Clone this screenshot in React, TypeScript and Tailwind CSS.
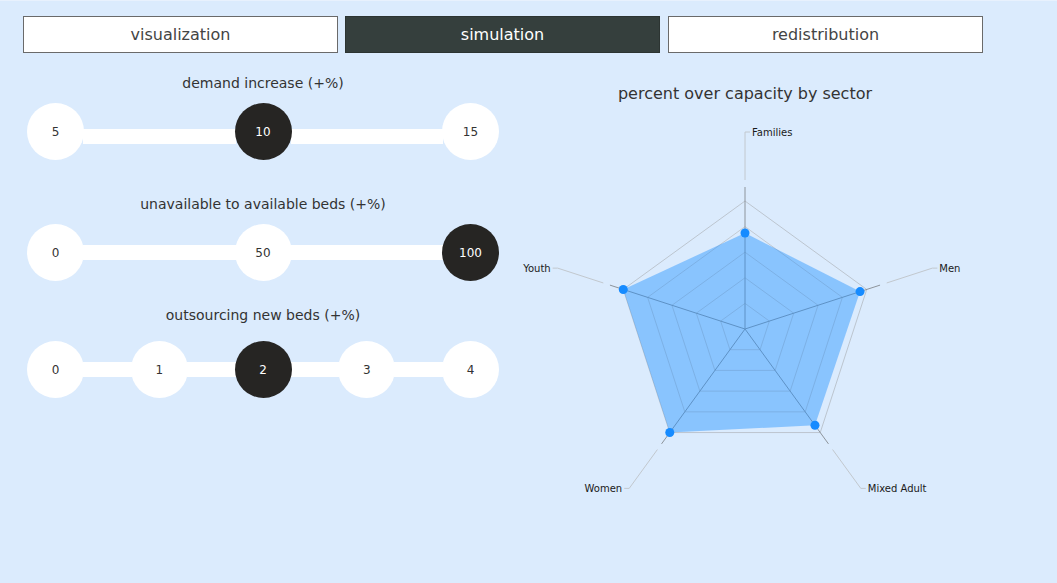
import { Fragment } from "react";
import clsx from "clsx";

type SliderProps = {
    label: string;
    steps: number[];
    value: number;
    className?: string;
    rowClass?: string;
    trackClass?: string;
};

function StepSlider({ label, steps, value, className, rowClass = "mt-[10px]", trackClass }: SliderProps) {
    return (
        <div className={className}>
            <div className="text-center text-[14px] leading-5 text-[#333]">{label}</div>
            <div className={clsx("flex items-center", rowClass)}>
                {steps.map((s, i) => (
                    <Fragment key={s}>
                        {i > 0 && <div className={clsx("flex-1 h-[15px] bg-white -mx-px", trackClass)} />}
                        <div
                            className={clsx(
                                "relative z-10 size-[57px] shrink-0 rounded-full flex items-center justify-center text-[12px]",
                                s === value ? "bg-[#262523] text-white" : "bg-white text-[#333]"
                            )}
                        >
                            {s}
                        </div>
                    </Fragment>
                ))}
            </div>
        </div>
    );
}

// radar chart: sectors clockwise from the top
const sectors = [
    { name: "Families", value: 0.75 },
    { name: "Men", value: 0.945 },
    { name: "Mixed Adult", value: 0.93 },
    { name: "Women", value: 1.0 },
    { name: "Youth", value: 1.0 },
];

const CX = 240;
const CY = 223;
const R = 128;

function polar(r: number, i: number) {
    const a = ((-90 + i * 72) * Math.PI) / 180;
    return { x: CX + r * Math.cos(a), y: CY + r * Math.sin(a) };
}

function ring(r: number) {
    return sectors.map((_, i) => {
        const p = polar(r, i);
        return `${p.x},${p.y}`;
    }).join(" ");
}

function Radar() {
    const dataPts = sectors.map((s, i) => polar(R * s.value, i));
    return (
        <svg width="480" height="420" viewBox="0 0 480 420" className="block">
            {[1, 2, 3, 4, 5].map((k) => (
                <polygon key={k} points={ring((R / 5) * k)} fill="none" stroke={k === 5 ? "#bcc5cf" : "#c3cad2"} strokeWidth="1" />
            ))}
            {sectors.map((s, i) => {
                const end = polar(142, i);
                const l1 = polar(149, i);
                const l2 = polar(197, i);
                const right = Math.cos(((-90 + i * 72) * Math.PI) / 180) >= -0.001;
                const tx = right ? l2.x + 5 : l2.x - 5;
                return (
                    <g key={s.name}>
                        <line x1={CX} y1={CY} x2={end.x} y2={end.y} stroke="#8d949b" strokeWidth="1" />
                        <polyline points={`${l1.x},${l1.y} ${l2.x},${l2.y} ${tx},${l2.y}`} fill="none" stroke="#c2c8ce" strokeWidth="1" />
                        <text
                            x={right ? tx + 2 : tx - 2}
                            y={l2.y}
                            textAnchor={right ? "start" : "end"}
                            dominantBaseline="central"
                            fontSize="10"
                            fill="#1a1a1a"
                            fontFamily="DejaVu Sans, sans-serif"
                        >
                            {s.name}
                        </text>
                    </g>
                );
            })}
            <polygon points={dataPts.map((p) => `${p.x},${p.y}`).join(" ")} fill="#1e90ff" fillOpacity="0.43" />
            {dataPts.map((p, i) => (
                <circle key={i} cx={p.x} cy={p.y} r="4.5" fill="#168bff" />
            ))}
        </svg>
    );
}

export default function App() {
    return (
        <div className="w-full h-[583px] overflow-hidden bg-[#dbebfd] border-t border-[#e8f1fd] pt-[15px] font-['DejaVu_Sans',sans-serif]">
            <div className="flex pl-[23px] gap-[7px]">
                <button className="w-[315px] h-[37px] pt-px bg-white border border-[#6a6a6a] text-[16px] text-[#444]">visualization</button>
                <button className="w-[315px] h-[37px] pt-px bg-[#353f3d] border border-[#2c3432] text-[16px] text-white">simulation</button>
                <button className="w-[315px] h-[37px] pt-px ml-px bg-white border border-[#6a6a6a] text-[16px] text-[#444]">redistribution</button>
            </div>
            <div className="flex pl-[27px]">
                <div className="w-[472px] shrink-0">
                    <StepSlider className="mt-[20px]" label="demand increase (+%)" steps={[5, 10, 15]} value={10} trackClass="mt-[9px]" />
                    <StepSlider className="mt-[34px]" label="unavailable to available beds (+%)" steps={[0, 50, 100]} value={100} />
                    <StepSlider className="mt-[24px]" rowClass="mt-[16px]" label="outsourcing new beds (+%)" steps={[0, 1, 2, 3, 4]} value={2} />
                </div>
                <div className="w-[480px] ml-[6px] shrink-0">
                    <div className="mt-[29px] text-center text-[16px] leading-6 text-[#333]">percent over capacity by sector</div>
                    <Radar />
                </div>
            </div>
        </div>
    );
}
